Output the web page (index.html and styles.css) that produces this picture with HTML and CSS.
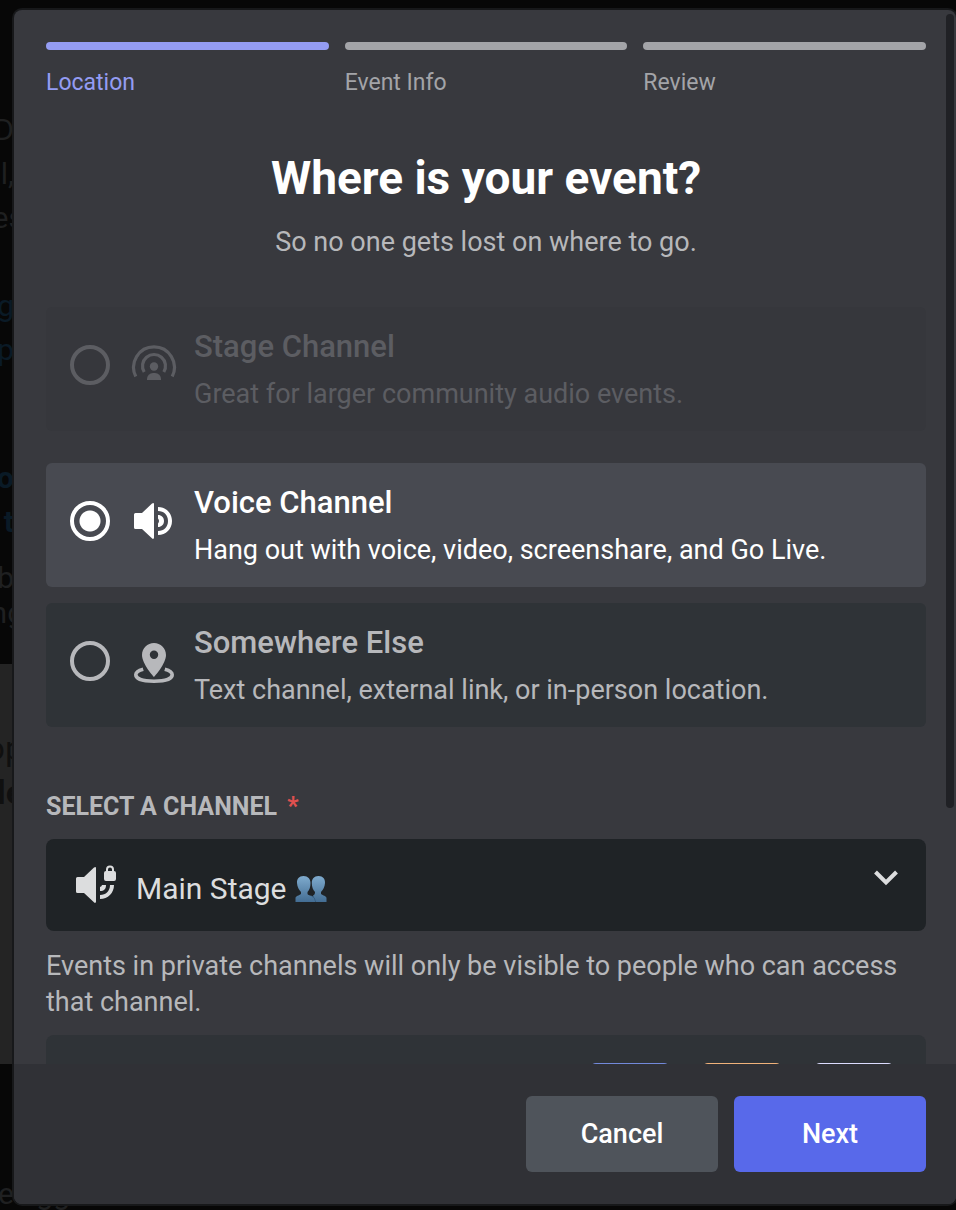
FILE: index.html
```html
<!DOCTYPE html>
<html lang="en">
<head>
<meta charset="utf-8">
<meta name="viewport" content="width=device-width, initial-scale=1">
<title>Create Event</title>
<link rel="stylesheet" href="styles.css">
</head>
<body>
<div class="backdrop" aria-hidden="true">
  <div class="page-text page-intro">
    <div class="block"><p>D</p><p>l,</p><p class="wide">es</p></div>
    <div class="block linkish"><p>g</p><p>p</p></div>
    <div class="block linkish strong"><p>o</p><p>t</p></div>
    <div class="block small"><p>b</p><p class="wide">ng</p></div>
  </div>
  <div class="page-text page-panel"><p class="wide">op</p><p class="wide strong">le</p></div>
  <div class="page-text page-end"><p>e</p><p>gg</p></div>
</div>

<main class="modal" role="dialog" aria-labelledby="title">
  <div class="body">
    <form class="content" id="event-form">
      <ol class="steps">
        <li class="step current">Location</li>
        <li class="step">Event Info</li>
        <li class="step">Review</li>
      </ol>

      <header class="intro">
        <h1 id="title">Where is your event?</h1>
        <p>So no one gets lost on where to go.</p>
      </header>

      <div class="options">
        <label class="option disabled">
          <input type="radio" name="place" disabled>
          <svg class="icon" viewBox="0 0 48 48" fill="none" stroke="currentColor" stroke-width="3.200">
            <path d="M5.800 35.500A20.400 20.400 0 1 1 42.200 35.500"/>
            <path d="M14.200 31A11.500 11.500 0 1 1 33.800 31"/>
            <circle cx="24" cy="25.500" r="4.200" fill="currentColor" stroke="none"/>
            <path d="M17 39v-1a6 6 0 0 1 6-6h2a6 6 0 0 1 6 6v1z" fill="currentColor" stroke="none"/>
          </svg>
          <span class="option-text"><strong>Stage Channel</strong><span>Great for larger community audio events.</span></span>
        </label>
        <label class="option selected">
          <input type="radio" name="place" checked>
          <svg class="icon" viewBox="0 0 48 48" fill="currentColor">
            <path d="M22.800 6.200C23.600 5.900 24 6.400 24 7.200V40.800C24 41.800 23 42.200 22.200 41.600L12 32H5.500Q4 32 4 30.500V17.500Q4 16 5.500 16H12L22 6.600z"/>
            <path d="M28 10C36 10 42 16 42 24S36 38 28 38V34C34 34 38 30 38 24S34 14 28 14z"/>
            <path d="M28 18C31.500 18 34 20.500 34 24S31.500 30 28 30V26.500Q30 24 28 21.500z"/>
          </svg>
          <span class="option-text"><strong>Voice Channel</strong><span>Hang out with voice, video, screenshare, and Go Live.</span></span>
        </label>
        <label class="option">
          <input type="radio" name="place">
          <svg class="icon" viewBox="0 0 48 48" fill="currentColor">
            <path fill-rule="evenodd" d="M24 6C17.400 6 12 11.200 12 18C12 27 24 40 24 40S36 27 36 18C36 11.200 30.600 6 24 6zM24 22a4.200 4.200 0 1 1 0-8.400a4.200 4.200 0 0 1 0 8.400z"/>
            <path d="M13.200 32.200C8.500 33.500 5.800 35.500 5.800 37.800C5.800 41.500 12 44.200 24 44.200S42.200 41.500 42.200 37.800C42.200 35.500 39.500 33.500 34.800 32.200" fill="none" stroke="currentColor" stroke-width="3.600"/>
          </svg>
          <span class="option-text"><strong>Somewhere Else</strong><span>Text channel, external link, or in-person location.</span></span>
        </label>
      </div>

      <label class="field-label" for="channel">SELECT A CHANNEL <span class="required">*</span></label>
      <div class="select-box">
        <svg class="icon" viewBox="0 0 48 48" fill="currentColor">
          <path d="M22.800 6.200C23.600 5.900 24 6.400 24 7.200V40.800C24 41.800 23 42.200 22.200 41.600L12 32H5.500Q4 32 4 30.500V17.500Q4 16 5.500 16H12L22 6.600z"/>
          <path d="M38 24h4C42 32 36 38 28 38V34C34 34 38 30 38 24zM30 24h4C34 28 32 30 28 30V26Q29.800 25.500 30 24z"/>
          <path fill-rule="evenodd" d="M34 10V8.500a4 4 0 0 1 8 0V10Q44 10 44 12V18Q44 20 42 20H34Q32 20 32 18V12Q32 10 34 10zM36 10H40V8.500a2 2 0 0 0-4 0z"/>
        </svg>
        <select id="channel"><option>Main Stage</option></select>
        <svg class="people" viewBox="0 0 32 28" role="img" aria-label="Two people">
          <defs><linearGradient id="bust" x1="0" y1="0" x2="0" y2="1"><stop offset="0" stop-color="#7fabce"/><stop offset="1" stop-color="#436d93"/></linearGradient></defs>
          <path fill="url(#bust)" d="M8.500 1C4 1 1.800 4 2 8C2.200 12 4 15 6 17V19C4 20.500.8 21 .5 23V27H20V23C18.500 20.500 13.500 21 12.500 19V17C14.500 15 15.500 12 15.500 8C15.500 4 13 1 8.500 1z"/>
          <path fill="url(#bust)" d="M23.500 1C28 1 30.200 4 30 8C29.800 12 28 15 26 17V19C28 20.500 31.200 21 31.500 23V27H20.500L18 20.500C19.500 20 20 19 20 17C18 15 16.800 12 16.800 8C16.800 4 19 1 23.500 1z"/>
          <path fill="none" stroke="#315a80" stroke-width=".8" d="M16.500 21Q20 22 20.500 26.500"/>
        </svg>
        <svg class="chevron" viewBox="0 0 24 16" fill="none" stroke="currentColor" stroke-width="4"><path d="M1.500 2L12 12.500L22.500 2"/></svg>
      </div>
      <p class="help">Events in private channels will only be visible to people who can access that channel.</p>
      <div class="preview"><span class="tile blue"></span><span class="tile orange"></span><span class="tile lilac"></span></div>
    </form>
    <div class="scrollbar" aria-hidden="true"></div>
  </div>
  <footer class="actions">
    <button type="button" class="button">Cancel</button>
    <button type="submit" form="event-form" class="button primary">Next</button>
  </footer>
</main>
</body>
</html>
```
FILE: styles.css
```css
* { box-sizing: border-box; }
body {
  margin: 0;
  height: 100vh;
  padding: 10px 0 6px 14px;
  overflow: hidden;
  background: #070707;
  color: #b7b8bb;
  font-family: Roboto, "Noto Sans", sans-serif;
  font-size: 27px;
}
h1, p, ol { margin: 0; padding: 0; }

.backdrop {
  position: absolute;
  inset: 0;
  z-index: -1;
  display: grid;
  grid-template-rows: 664px 400px 1fr;
  overflow: hidden;
  color: #1f2021;
  font-size: 30px;
  line-height: 44px;
}
.page-text { display: flex; flex-direction: column; }
.page-text p { display: flex; justify-content: flex-end; width: 14px; white-space: nowrap; }
.page-text .wide { width: 24px; }
.page-intro { padding-top: 108px; }
.page-intro .block { margin-bottom: 44px; }
.page-intro .linkish { margin-bottom: 84px; }
.page-intro .strong { margin-bottom: 16px; }
.page-intro .small { line-height: 35px; }
.linkish { color: #0a1a26; }
.strong { font-weight: 700; }
.page-panel { padding-top: 62px; background: #242424; color: #101010; font-size: 34px; }
.page-end { flex-direction: row; gap: 56px; padding-top: 108px; }
.page-end { gap: 42px; }

.modal {
  display: flex;
  flex-direction: column;
  height: 100%;
  overflow: hidden;
  border-radius: 8px;
  background: #38393e;
  box-shadow: 0 0 0 2px #17181a;
}
.body { display: flex; flex: 1; gap: 20px; min-height: 0; padding: 0 2px 0 32px; overflow: hidden; }
.content { flex: 1; min-width: 0; padding-top: 32px; }
.scrollbar { width: 8px; height: 794px; margin-top: 4px; border-radius: 4px; background: #202125; }

.steps { display: grid; grid-template-columns: repeat(3, 1fr); gap: 16px; list-style: none; color: #a3a4a8; font-size: 23px; line-height: 28px; }
.step::before { content: ""; display: block; height: 8px; margin-bottom: 19px; border-radius: 4px; background: currentColor; }
.current { color: #949cf3; }

.intro { padding: 51px 0 47px; text-align: center; }
h1 { color: #fff; font-size: 46px; font-weight: 700; line-height: 60px; }
.intro p { margin-top: 16px; line-height: 36px; }

.options { display: grid; gap: 16px; }
.option { display: flex; align-items: center; height: 124px; padding: 0 24px; border-radius: 6px; background: #2f3337; }
.option.selected { background: #484a51; color: #fff; }
.option.disabled { margin-bottom: 16px; background: #36373c; color: #5c5d62; }
.option input { appearance: none; flex: none; width: 40px; height: 40px; margin: 0 20px 8px 0; border: 4px solid currentColor; border-radius: 50%; color: inherit; }
.option input:checked { background: radial-gradient(circle, currentColor 10px, transparent 11px); }
.icon { flex: none; width: 48px; height: 48px; }
.option .icon { margin: 0 16px 8px 0; }
.option-text { display: grid; gap: 9px; line-height: 36px; }
.option-text strong { font-size: 31px; font-weight: 500; line-height: 40px; }

.field-label { display: block; margin-top: 64px; font-size: 25px; font-weight: 700; line-height: 32px; }
.required { margin-left: 4px; color: #e0504f; }
.select-box { display: flex; align-items: center; height: 92px; margin-top: 16px; padding: 0 28px 0 26px; border-radius: 8px; background: #1f2326; color: #dcddde; }
.select-box select { appearance: none; padding: 0; margin: 8px 8px 0 16px; border: 0; background: transparent; color: inherit; font: inherit; font-size: 30px; line-height: 40px; }
.people { width: 32px; height: 28px; margin-top: 8px; }
.chevron { width: 24px; height: 16px; margin: 0 0 14px auto; }
.help { margin-top: 17px; line-height: 36px; }
.preview { display: flex; justify-content: flex-end; gap: 32px; height: 160px; margin-top: 15px; padding: 28px 32px; border-radius: 8px; background: #2f3337; }
.tile { width: 80px; height: 80px; border-radius: 6px; }
.blue { background: #7289da; }
.orange { background: #f0b27a; }
.lilac { background: #dcdcff; }

.actions { display: flex; justify-content: flex-end; gap: 16px; padding: 32px 30px 32px 32px; background: #303136; }
.button { width: 192px; height: 76px; border: 0; border-radius: 6px; background: #4f545b; color: #fff; font: inherit; font-weight: 500; }
.primary { background: #5869ea; }
```
